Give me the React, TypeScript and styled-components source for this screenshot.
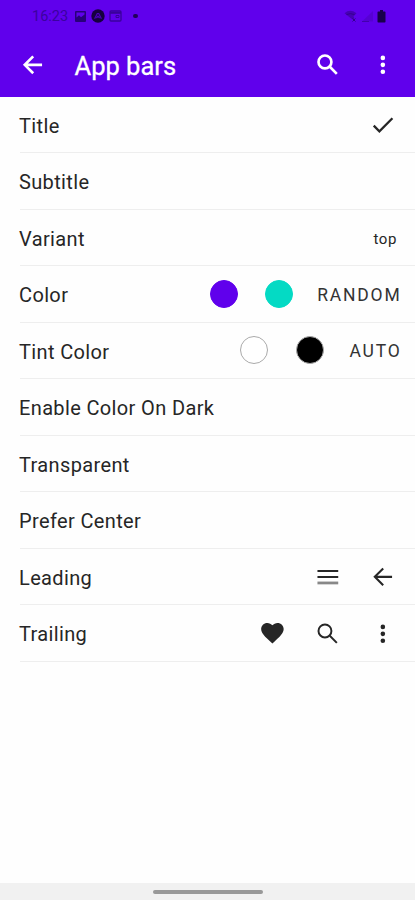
import React from 'react';
import styled, { createGlobalStyle } from 'styled-components';

const GlobalStyle = createGlobalStyle`
  * { box-sizing: border-box; }
  body { margin: 0; background: #fff; font-family: Roboto, sans-serif; }
`;

const Screen = styled.div`
  display: flex;
  flex-direction: column;
  width: 100%;
  height: 900px;
  background: #fefefe;
  overflow: hidden;
`;

const Header = styled.header`
  display: flex;
  flex-direction: column;
  flex: none;
  height: 97px;
  background: #6000ec;
`;

const StatusBar = styled.div`
  display: flex;
  align-items: center;
  justify-content: space-between;
  height: 32px;
  padding: 0 29px 0 32px;
  color: #28007a;
`;

const StatusGroup = styled.div<{ $gap: number }>`
  display: flex;
  align-items: center;
  gap: ${(p) => p.$gap}px;
`;

const Clock = styled.span`
  width: 37px;
  margin: 2px 1px 0 0;
  font-size: 14.5px;
  line-height: 32px;
  color: #3b02a0;
  white-space: nowrap;
`;

const TopBar = styled.div`
  display: flex;
  align-items: center;
  height: 65px;
  padding: 0 4px 0 5px;
  color: #fff;
`;

const PageTitle = styled.h1`
  flex: 1;
  margin: 3px 0 0 14px;
  font-size: 25.5px;
  line-height: 32px;
  font-weight: 400;
  -webkit-text-stroke: 0.3px #fff;
`;

const IconButton = styled.button`
  display: flex;
  align-items: center;
  justify-content: center;
  flex: none;
  width: 55.5px;
  height: 54px;
  padding: 0;
  border: 0;
  background: none;
  color: inherit;
`;

const RowIconButton = styled(IconButton)`
  padding-top: 2px;
`;

const List = styled.ul`
  flex: 1;
  margin: -0.5px 0 0;
  padding: 0 0 0 20px;
  list-style: none;
`;

const Row = styled.li`
  display: flex;
  align-items: center;
  height: 56.5px;
  padding-right: 4px;
  border-bottom: 1px solid #eeeeee;
  color: #262626;
`;

const Label = styled.span`
  flex: 1;
  margin: 3px 0 0 -1px;
  font-size: 20px;
  line-height: 28px;
  letter-spacing: 0.36px;
  white-space: nowrap;
`;

const Value = styled.span`
  margin: 3px 14px 0 0;
  font-size: 15px;
  letter-spacing: 0.6px;
`;

const TextButton = styled.button<{ $lead?: number }>`
  margin: 2px 9.5px 0 ${(p) => p.$lead ?? 10}px;
  padding: 0;
  border: 0;
  background: none;
  color: #333;
  font-family: inherit;
  font-size: 17.5px;
  line-height: 24px;
  letter-spacing: 1.8px;
`;

const Swatch = styled.span<{ $color: string; $outline?: boolean }>`
  width: 28px;
  height: 28px;
  border: 1px solid ${(p) => (p.$outline ? '#aaa' : p.$color)};
  border-radius: 50%;
  background: ${(p) => p.$color};
`;

const GestureBar = styled.footer`
  display: flex;
  justify-content: center;
  flex: none;
  height: 17px;
  padding-top: 7px;
  background: #f1f1f1;
`;

const Handle = styled.div`
  width: 110px;
  height: 4px;
  border-radius: 2px;
  background: #999;
`;

const Glyph = styled.svg`
  display: block;
  flex: none;
  width: 27.7px;
  height: 27.7px;
`;

type IconProps = { weight?: number };

const BackIcon = ({ weight = 2.3 }: IconProps) => (
  <Glyph viewBox="0 0 24 24" fill="none" stroke="currentColor" strokeWidth={weight}>
    <path d="M20 12H5M12.3 4.7L5 12l7.3 7.3" />
  </Glyph>
);

const SearchIcon = ({ weight = 2.3 }: IconProps) => (
  <Glyph viewBox="0 0 24 24" fill="none" stroke="currentColor" strokeWidth={weight}>
    <circle cx="9.5" cy="9.5" r="5.6" />
    <path d="M13.7 13.7L19.8 19.8" />
  </Glyph>
);

const MoreIcon = () => (
  <Glyph viewBox="0 0 24 24" fill="currentColor">
    <circle cx="12" cy="6" r="2" />
    <circle cx="12" cy="12" r="2" />
    <circle cx="12" cy="18" r="2" />
  </Glyph>
);

const CheckIcon = () => (
  <Glyph viewBox="0 0 24 24" fill="currentColor">
    <path d="M9 16.17L4.83 12l-1.42 1.41L9 19 21 7l-1.41-1.41z" />
  </Glyph>
);

const MenuIcon = () => (
  <Glyph viewBox="0 0 24 24" fill="none" stroke="currentColor" strokeWidth="1.8">
    <path d="M3 6.9h18M3 12.1h18" />
    <path d="M3 17.3h18" strokeWidth="2.4" opacity="0.55" />
  </Glyph>
);

const HeartIcon = () => (
  <Glyph viewBox="-0.8 0.4 24.6 24.6" fill="currentColor">
    <path d="M12 21.35l-1.45-1.32C5.4 15.36 2 12.28 2 8.5 2 5.42 4.42 3 7.5 3c1.74 0 3.41.81 4.5 2.09C13.09 3.81 14.76 3 16.5 3 19.58 3 22 5.42 22 8.5c0 3.78-3.4 6.86-8.55 11.54L12 21.35z" />
  </Glyph>
);

const PictureStatus = () => (
  <svg width="13" height="13" viewBox="0 0 13 13">
    <path fill="currentColor" fillRule="evenodd" d="M2 1h9a1 1 0 0 1 1 1v9a1 1 0 0 1-1 1H2a1 1 0 0 1-1-1V2a1 1 0 0 1 1-1zm.5 1.5v5L5 5.2l2 2 3.5-2.7v-2z" />
  </svg>
);

const AppStatus = () => (
  <svg width="14" height="14" viewBox="0 0 14 14">
    <circle cx="7" cy="7" r="6.7" fill="#16003f" />
    <path d="M3.6 9.7L6.3 4.5h1.4l2.7 5.2M5.4 9L7 7.2 8.6 9" fill="none" stroke="#4b00bd" strokeWidth="1.2" />
  </svg>
);

const CalendarStatus = () => (
  <svg width="13" height="12" viewBox="0 0 13 12" fill="none" stroke="#3a009c">
    <rect x="1" y="1" width="11" height="10" rx="1" strokeWidth="1.3" />
    <path d="M1 2.8h11" strokeWidth="2" />
    <path d="M7 5.5h3v2H7z" />
  </svg>
);

const DotStatus = styled.span`
  width: 4.5px;
  height: 4.5px;
  margin-left: 7px;
  border-radius: 50%;
  background: #20005a;
`;

const WifiStatus = () => (
  <svg width="14" height="13" viewBox="0 0 14 13">
    <path d="M0.5 3.2Q6-1.5 12.5 3.2L9.6 6.3 11 11 6.5 8z" fill="#4700b4" />
    <path d="M2.5 4.6q3.7-2 8 0M8.5 8.5l3 3m0-3l-3 3" fill="none" stroke="#35008f" />
  </svg>
);

const SignalStatus = () => (
  <svg width="13" height="12" viewBox="0 0 13 12">
    <path d="M1 11.5L12 1v10.5z" fill="#5600d4" />
    <path d="M1 11.5h7" stroke="#4300ad" />
  </svg>
);

const BatteryStatus = () => (
  <svg width="9" height="13" viewBox="0 0 9 13">
    <path d="M3 0h3v1.5h1.7q.8 0 .8.8v9.4q0 .8-.8.8H1.3q-.8 0-.8-.8V2.3q0-.8.8-.8H3z" fill="#19004a" />
  </svg>
);

type SettingProps = { label: string; children?: React.ReactNode };

const Setting = ({ label, children }: SettingProps) => (
  <Row>
    <Label>{label}</Label>
    {children}
  </Row>
);

export default function App() {
  return (
    <Screen>
      <GlobalStyle />
      <Header>
        <StatusBar>
          <StatusGroup $gap={4}>
            <Clock>16:23</Clock>
            <PictureStatus />
            <AppStatus />
            <CalendarStatus />
            <DotStatus />
          </StatusGroup>
          <StatusGroup $gap={3}>
            <WifiStatus />
            <SignalStatus />
            <BatteryStatus />
          </StatusGroup>
        </StatusBar>
        <TopBar>
          <IconButton aria-label="Back"><BackIcon /></IconButton>
          <PageTitle>App bars</PageTitle>
          <IconButton aria-label="Search"><SearchIcon /></IconButton>
          <IconButton aria-label="More"><MoreIcon /></IconButton>
        </TopBar>
      </Header>
      <List>
        <Setting label="Title">
          <RowIconButton aria-label="Enabled"><CheckIcon /></RowIconButton>
        </Setting>
        <Setting label="Subtitle" />
        <Setting label="Variant"><Value>top</Value></Setting>
        <Setting label="Color">
          <IconButton aria-label="Purple"><Swatch $color="#6000ec" /></IconButton>
          <IconButton aria-label="Teal"><Swatch $color="#04dac4" /></IconButton>
          <TextButton>RANDOM</TextButton>
        </Setting>
        <Setting label="Tint Color">
          <IconButton aria-label="White"><Swatch $color="#fff" $outline /></IconButton>
          <IconButton aria-label="Black"><Swatch $color="#000" $outline /></IconButton>
          <TextButton $lead={12}>AUTO</TextButton>
        </Setting>
        <Setting label="Enable Color On Dark" />
        <Setting label="Transparent" />
        <Setting label="Prefer Center" />
        <Setting label="Leading">
          <RowIconButton aria-label="Menu"><MenuIcon /></RowIconButton>
          <RowIconButton aria-label="Back arrow"><BackIcon weight={1.8} /></RowIconButton>
        </Setting>
        <Setting label="Trailing">
          <RowIconButton aria-label="Heart"><HeartIcon /></RowIconButton>
          <RowIconButton aria-label="Magnifier"><SearchIcon weight={1.7} /></RowIconButton>
          <RowIconButton aria-label="More options"><MoreIcon /></RowIconButton>
        </Setting>
      </List>
      <GestureBar><Handle /></GestureBar>
    </Screen>
  );
}
